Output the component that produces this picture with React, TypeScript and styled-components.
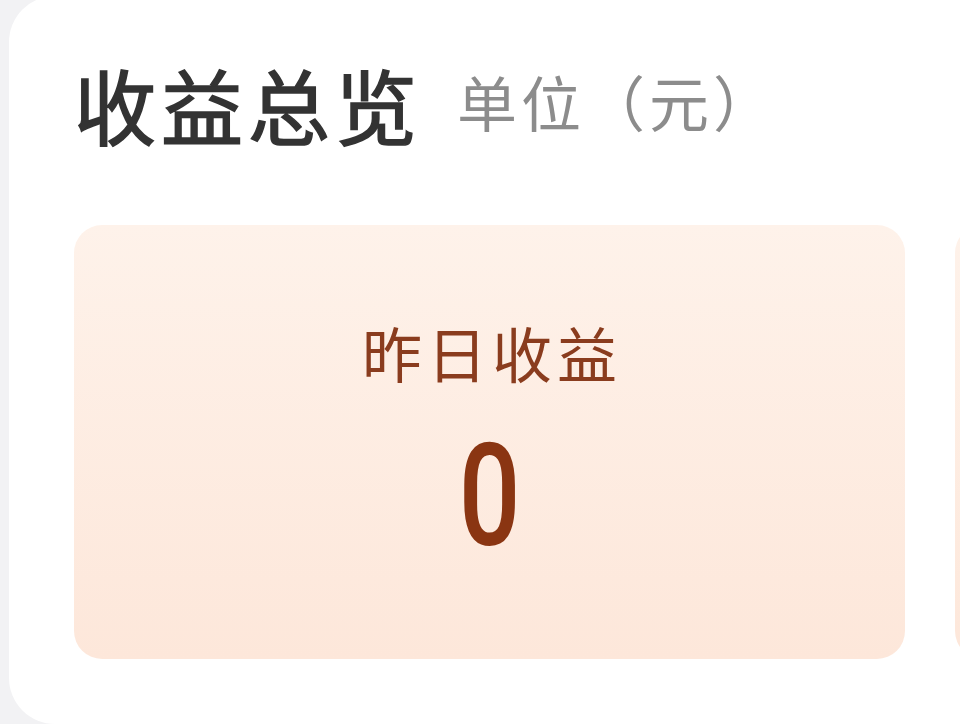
import React from 'react';
import styled, { createGlobalStyle } from 'styled-components';

const GlobalStyle = createGlobalStyle`
  html, body {
    margin: 0;
    padding: 0;
    background: #f2f2f4;
  }
  body {
    font-family: "Noto Sans CJK SC", "Noto Sans", sans-serif;
  }
`;

const Page = styled.div`
  width: 960px;
  height: 724px;
  overflow: hidden;
  background: #f2f2f4;
  padding-left: 9px;
  box-sizing: border-box;
`;

const Panel = styled.section`
  width: 1400px;
  height: 728px;
  margin-top: -4px;
  background: #ffffff;
  border-radius: 46px;
  padding: 52px 0 0 65px;
  box-sizing: border-box;
`;

const Header = styled.header`
  display: flex;
  align-items: center;
  gap: 35px;
  height: 112px;
`;

const Title = styled.h1`
  margin: 0;
  font-size: 82px;
  line-height: 110px;
  font-weight: 400;
  color: #333333;
  -webkit-text-stroke: 1.6px #333333;
  letter-spacing: 5px;
`;

const Unit = styled.span`
  font-size: 60px;
  line-height: 110px;
  font-weight: 400;
  color: #8c8c8c;
  letter-spacing: 4px;
  margin-top: -6px;
  font-feature-settings: "fwid";
`;

const CardRow = styled.div`
  display: flex;
  gap: 50px;
  margin-top: 65px;
`;

const StatCard = styled.div`
  flex: 0 0 auto;
  width: 831px;
  height: 434px;
  border-radius: 28px;
  background: linear-gradient(180deg, #fef2ea 0%, #fde7da 100%);
  display: flex;
  flex-direction: column;
  align-items: center;
  padding-top: 87px;
  box-sizing: border-box;
  color: #8a3c1e;
`;

const StatLabel = styled.div`
  font-size: 60px;
  line-height: 80px;
  letter-spacing: 5px;
  margin-right: -5px;
`;

const StatValue = styled.div`
  font-family: Roboto, "Liberation Sans", sans-serif;
  font-weight: 500;
  font-size: 143px;
  line-height: 150px;
  margin-top: 29px;
  color: #8a3512;
  transform: scaleX(0.76);
`;

export default function App() {
  return (
    <Page>
      <GlobalStyle />
      <Panel>
        <Header>
          <Title>收益总览</Title>
          <Unit>单位（元）</Unit>
        </Header>
        <CardRow>
          <StatCard>
            <StatLabel>昨日收益</StatLabel>
            <StatValue>0</StatValue>
          </StatCard>
          {/* next card, scrolled off to the right */}
          <StatCard aria-hidden />
        </CardRow>
      </Panel>
    </Page>
  );
}
